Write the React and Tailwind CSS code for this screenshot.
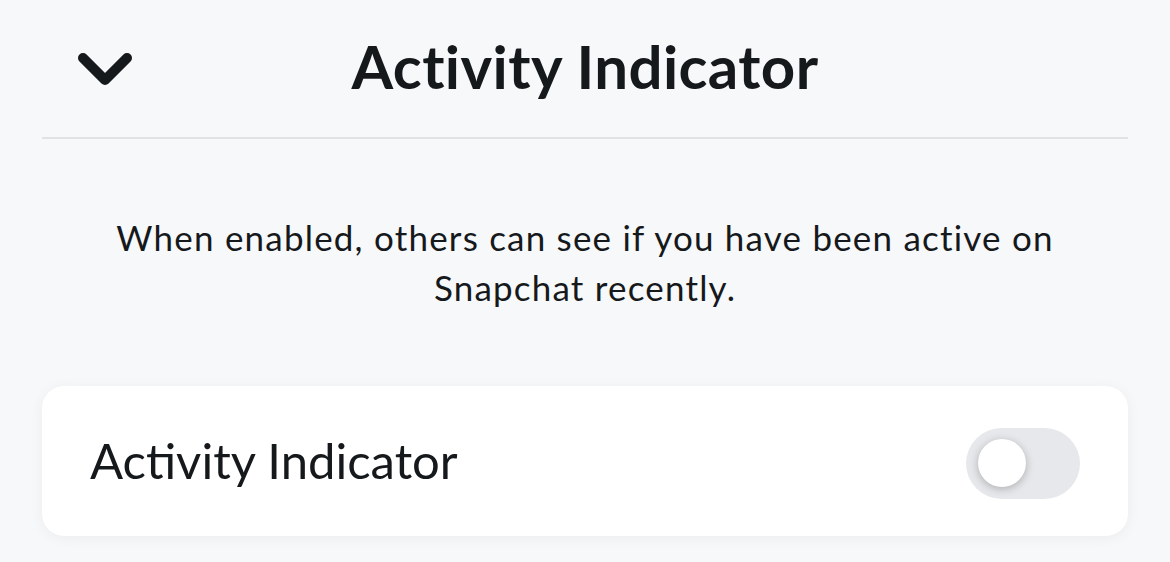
import React from "react";

export default function App() {
  return (
    <div className="w-[1170px] h-[562px] bg-[#f7f8fa] text-[#16191c] overflow-hidden" style={{ fontFamily: "Lato, 'Noto Sans', sans-serif" }}>
      <div className="px-[42px]">
        <div className="grid grid-cols-[1fr_auto_1fr] items-center h-[137px]">
          <div className="pl-[36px] pt-[2px]">
            <svg width="56" height="34" viewBox="0 0 56 34" fill="none">
              <path d="M5 5 L27 27 L49 5" stroke="#16191c" strokeWidth="10" strokeLinecap="round" strokeLinejoin="round" />
            </svg>
          </div>
          <h1 className="text-[60px] font-bold leading-[60px] tracking-[0.4px] pb-[6px]">Activity Indicator</h1>
          <div />
        </div>
        <div className="h-[2px] bg-[#e1e2e4]" />
        <p className="mt-[73px] text-center text-[35px] leading-[50px] tracking-[1.2px]">
          When enabled, others can see if you have been active on
          <br />
          Snapchat recently.
        </p>
        <div className="mt-[74px] h-[150px] rounded-[22px] bg-white shadow-[0_2px_14px_rgba(0,0,0,0.05)] flex items-center justify-between pl-[48px] pr-[48px]">
          <span className="text-[49px] leading-[56px] pb-[2px]">Activity Indicator</span>
          <div className="w-[114px] h-[71px] mt-[4px] rounded-full bg-[#e6e8eb] flex items-center pl-[12px]">
            <div className="w-[48px] h-[48px] rounded-full bg-white shadow-[0_2px_8px_rgba(0,0,0,0.25)]" />
          </div>
        </div>
      </div>
    </div>
  );
}
